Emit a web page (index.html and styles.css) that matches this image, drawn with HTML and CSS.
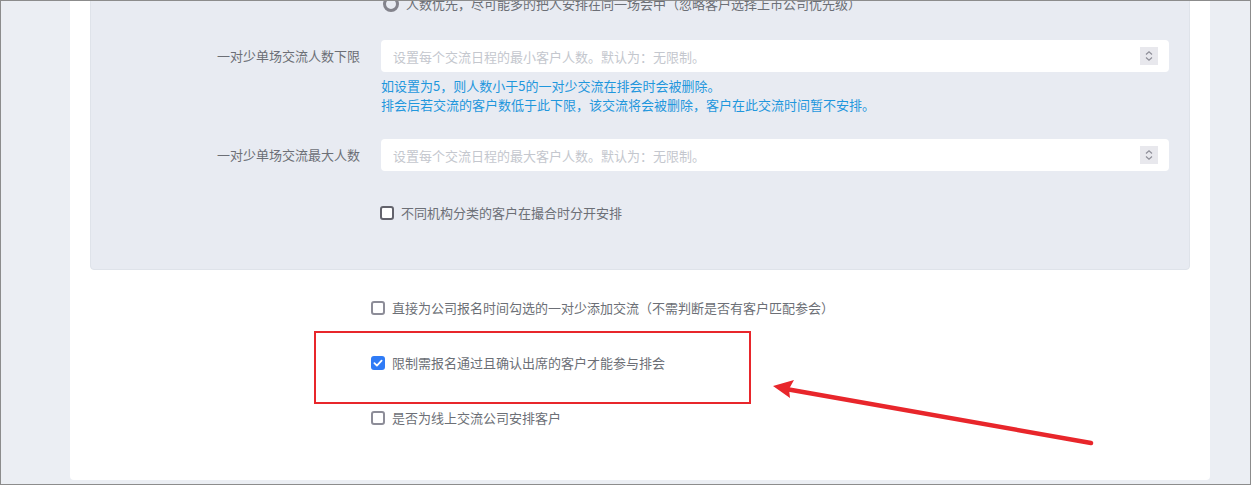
FILE: index.html
```html
<!DOCTYPE html>
<html lang="zh-CN">
<head>
    <meta charset="UTF-8">
    <meta name="viewport" content="width=device-width, initial-scale=1.0">
    <title>排会设置</title>
    <link rel="stylesheet" href="styles.css">
</head>
<body>
    <div class="window">
        <div class="card">
            <div class="panel">
                <div class="radio-row">
                    <span class="radio"></span>
                    <span>人数优先，尽可能多的把人安排在同一场会中（忽略客户选择上市公司优先级）</span>
                </div>

                <div class="form-item first">
                    <label class="form-label">一对少单场交流人数下限</label>
                    <div class="form-content">
                        <div class="number-input">
                            <input type="text" placeholder="设置每个交流日程的最小客户人数。默认为：无限制。">
                            <span class="spinner">
                                <svg width="18" height="18" viewBox="0 0 18 18">
                                    <path d="M6 7.5 L9 4.8 L12 7.5 M6 10.5 L9 13.2 L12 10.5" fill="none" stroke="#8e8e98" stroke-width="1.2"/>
                                </svg>
                            </span>
                        </div>
                        <div class="form-help">
                            <div>如设置为5，则人数小于5的一对少交流在排会时会被删除。</div>
                            <div>排会后若交流的客户数低于此下限，该交流将会被删除，客户在此交流时间暂不安排。</div>
                        </div>
                    </div>
                </div>

                <div class="form-item second">
                    <label class="form-label">一对少单场交流最大人数</label>
                    <div class="form-content">
                        <div class="number-input">
                            <input type="text" placeholder="设置每个交流日程的最大客户人数。默认为：无限制。">
                            <span class="spinner">
                                <svg width="18" height="18" viewBox="0 0 18 18">
                                    <path d="M6 7.5 L9 4.8 L12 7.5 M6 10.5 L9 13.2 L12 10.5" fill="none" stroke="#8e8e98" stroke-width="1.2"/>
                                </svg>
                            </span>
                        </div>
                    </div>
                </div>

                <div class="form-item third">
                    <div class="form-label"></div>
                    <div class="form-content">
                        <div class="check-row">
                            <span class="checkbox dark"></span>
                            <span>不同机构分类的客户在撮合时分开安排</span>
                        </div>
                    </div>
                </div>
            </div>

            <div class="options">
                <div class="check-row">
                    <span class="checkbox"></span>
                    <span>直接为公司报名时间勾选的一对少添加交流（不需判断是否有客户匹配参会）</span>
                </div>
                <div class="check-row">
                    <span class="checkbox checked">
                        <svg width="14" height="14" viewBox="0 0 14 14">
                            <path d="M3.4 7.2 L5.9 9.6 L10.6 4.6" fill="none" stroke="#fff" stroke-width="1.8" stroke-linecap="round" stroke-linejoin="round"/>
                        </svg>
                    </span>
                    <span>限制需报名通过且确认出席的客户才能参与排会</span>
                </div>
                <div class="check-row">
                    <span class="checkbox"></span>
                    <span>是否为线上交流公司安排客户</span>
                </div>
            </div>
        </div>

        <!-- annotation drawn over the screenshot -->
        <div class="mark-box"></div>
        <svg class="mark-arrow" width="1251" height="485" viewBox="0 0 1251 485">
            <line x1="1091" y1="443" x2="786" y2="389" stroke="#e8262b" stroke-width="4.5" stroke-linecap="round"/>
            <path d="M773 386 L794 380 L789 389 L790 398 Z" fill="#e8262b"/>
        </svg>
    </div>
</body>
</html>
```

FILE: styles.css
```css
body {
    margin: 0;
    font-family: "Noto Sans CJK SC", "Noto Sans", sans-serif;
    font-size: 13px;
    color: #6c6f76;
}
.window {
    position: relative;
    width: 1251px;
    height: 485px;
    box-sizing: border-box;
    border: 1px solid #8c8c8c;
    overflow: hidden;
    background-color: #ebeef3;
    padding: 0 40px 0 69px;
}
.card {
    margin-top: -28px;
    background-color: #fff;
    padding: 20px 20px 52px;
    border-radius: 4px;
}
.panel {
    background-color: #e8ebf2;
    border: 1px solid #dfe3ea;
    border-radius: 4px;
    padding: 0 0 46px;
}
.radio-row {
    display: flex;
    align-items: center;
    height: 20px;
    line-height: 20px;
    padding-left: 291px;
    gap: 7px;
}
.radio {
    width: 16px;
    height: 16px;
    box-sizing: border-box;
    border: 3px solid #83838c;
    border-radius: 50%;
    margin-left: 1px;
}
.form-item {
    display: flex;
}
.form-item.first {
    margin-top: 26px;
}
.form-item.second {
    margin-top: 25px;
}
.form-item.third {
    margin-top: 32px;
}
.form-label {
    width: 290px;
    flex-shrink: 0;
    box-sizing: border-box;
    padding-right: 21px;
    text-align: right;
    line-height: 32px;
}
.form-content {
    width: 788px;
}
.number-input {
    display: flex;
    align-items: center;
    height: 32px;
    background-color: #fff;
    border-radius: 4px;
    padding: 0 11px 0 12px;
}
.number-input input {
    flex: 1;
    border: none;
    outline: none;
    padding: 0;
    font-family: inherit;
    font-size: 13px;
    color: #606266;
    background: transparent;
}
.number-input input::placeholder {
    color: #c4c7ce;
}
.spinner {
    display: flex;
    width: 18px;
    height: 18px;
    background-color: #e8e8ed;
}
.form-help {
    margin-top: 4px;
    color: #1f97dd;
    line-height: 19px;
}
.check-row {
    display: flex;
    align-items: center;
    height: 20px;
    line-height: 20px;
    gap: 7px;
}
.form-content .check-row {
    margin-left: -1px;
}
.checkbox {
    display: flex;
    width: 14px;
    height: 14px;
    box-sizing: border-box;
    border: 2px solid #8d8d98;
    border-radius: 3px;
    background-color: #fff;
}
.checkbox.dark {
    border-color: #63636c;
}
.checkbox.checked {
    border: none;
    background-color: #2f7bf6;
}
.options {
    padding-left: 281px;
    margin-top: 28px;
}
.options .check-row + .check-row {
    margin-top: 35px;
}
.mark-box {
    position: absolute;
    left: 313px;
    top: 330px;
    width: 437px;
    height: 73px;
    box-sizing: border-box;
    border: 2px solid #e8262b;
}
.mark-arrow {
    position: absolute;
    left: -1px;
    top: -1px;
}
```
